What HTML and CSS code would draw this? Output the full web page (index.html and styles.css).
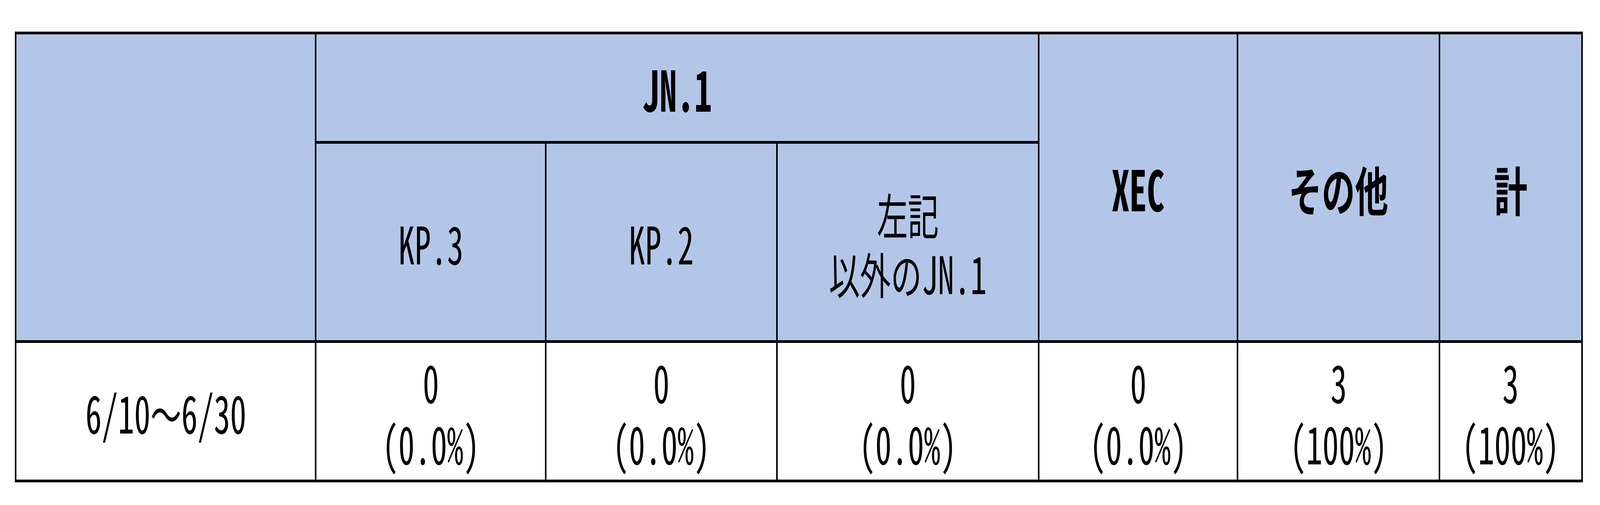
FILE: index.html
```html
<!DOCTYPE html>
<html lang="ja">
<head>
<meta charset="utf-8">
<title>JN.1 系統別</title>
<link rel="stylesheet" href="styles.css">
</head>
<body>
<table class="grid">
  <colgroup>
    <col class="c-period">
    <col class="c-kp3">
    <col class="c-kp2">
    <col class="c-other-jn1">
    <col class="c-xec">
    <col class="c-other">
    <col class="c-total">
  </colgroup>
  <thead>
    <tr class="r-top">
      <th class="head" rowspan="2"></th>
      <th class="head bold" colspan="3"><div class="fit"><span class="txt">JN.1</span></div></th>
      <th class="head bold" rowspan="2"><div class="fit"><span class="txt">XEC</span></div></th>
      <th class="head bold" rowspan="2"><div class="fit"><span class="txt"><span class="ja">その他</span></span></div></th>
      <th class="head bold" rowspan="2"><div class="fit"><span class="txt"><span class="ja">計</span></span></div></th>
    </tr>
    <tr class="r-sub">
      <th class="head"><div class="fit"><span class="txt">KP.3</span></div></th>
      <th class="head"><div class="fit"><span class="txt">KP.2</span></div></th>
      <th class="head"><div class="fit"><span class="txt"><span class="ja">左記</span><br><span class="ja">以外の</span>JN.1</span></div></th>
    </tr>
  </thead>
  <tbody>
    <tr class="r-data">
      <td class="cell"><div class="fit"><span class="txt">6/10<span class="ja">～</span>6/30</span></div></td>
      <td class="cell"><div class="fit"><span class="txt">0<br>(0.0%)</span></div></td>
      <td class="cell"><div class="fit"><span class="txt">0<br>(0.0%)</span></div></td>
      <td class="cell"><div class="fit"><span class="txt">0<br>(0.0%)</span></div></td>
      <td class="cell"><div class="fit"><span class="txt">0<br>(0.0%)</span></div></td>
      <td class="cell"><div class="fit"><span class="txt">3<br>(100%)</span></div></td>
      <td class="cell"><div class="fit"><span class="txt">3<br>(100%)</span></div></td>
    </tr>
  </tbody>
</table>
</body>
</html>
```
FILE: styles.css
```css
html, body {
  margin: 0;
  background: #ffffff;
}

body {
  padding: 81px 0 0 0.939vw;
  font-family: "Noto Sans CJK JP", sans-serif;
  font-feature-settings: "hwid" 1;
  color: #000000;
}

/* Horizontal sizes follow the window width; text is narrowed to match. */
.grid {
  table-layout: fixed;
  width: 97.983vw;
  border-collapse: separate;
  border-spacing: 0.1078vw 7px;
  background: #000000;
}

.c-period { width: 18.627vw; }
.c-kp3 { width: 14.270vw; }
.c-kp2 { width: 14.332vw; }
.c-other-jn1 { width: 16.256vw; }
.c-xec { width: 12.331vw; }
.c-other { width: 12.500vw; }
.c-total { width: 8.805vw; }

.r-top { height: 273px; }
.r-sub { height: 503px; }
.r-data { height: 350px; }

.head,
.cell {
  padding: 0;
  text-align: center;
  vertical-align: middle;
  font-size: 132px;
  font-weight: normal;
  line-height: 1.15;
}

.head {
  background: #b4c6e7;
}

.cell {
  background: #ffffff;
  line-height: 1.19;
}

.bold {
  font-weight: bold;
  font-size: 142px;
}

.fit {
  display: flex;
  justify-content: center;
}

.txt {
  flex: none;
  white-space: nowrap;
  text-align: center;
  transform: scaleX(0.630542);
}

.ja {
  font-size: 0.95em;
  font-feature-settings: normal;
}
```
